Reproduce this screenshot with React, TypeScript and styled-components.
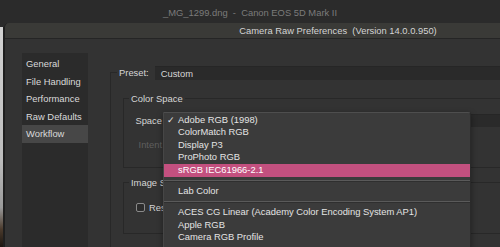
import React from "react";
import styled, { createGlobalStyle } from "styled-components";

const Global = createGlobalStyle`
  html, body { margin: 0; padding: 0; background: #2a2a2a; }
  body { font-family: "Liberation Sans", Arial, sans-serif; font-size: 9.4px; }
  * { box-sizing: border-box; }
`;

const Page = styled.div`
  width: 500px;
  height: 247px;
  overflow: hidden;
  display: flex;
  flex-direction: column;
  background: #2b2b2b;
`;

const OuterTitle = styled.div`
  height: 23px;
  flex-shrink: 0;
  display: flex;
  align-items: center;
  justify-content: center;
  color: #7b7b7b;
  white-space: pre;
  padding-top: 1px;
`;

const Stage = styled.div`
  flex: 1;
  display: flex;
  min-height: 0;
`;

const LeftStrip = styled.div`
  width: 4px;
  margin-top: 4px;
  flex-shrink: 0;
  border-right: 1px solid #1f1f1f;
  background: linear-gradient(
    to bottom,
    #d2d2d2 0%,
    #bdbdbd 60%,
    #9a9a9a 82%,
    #4a3a2c 92%,
    #1b1510 100%
  );
`;

const Dialog = styled.div`
  width: 667px;
  flex-shrink: 0;
  display: flex;
  flex-direction: column;
  background: #333333;
  border-top-left-radius: 5px;
  border-left: 1px solid #1e1e1e;
  overflow: hidden;
`;

const DialogTitle = styled.div`
  height: 16px;
  flex-shrink: 0;
  display: flex;
  align-items: center;
  justify-content: center;
  background: #3a3a37;
  border-bottom: 1px solid #252525;
  color: #d4d4d4;
  white-space: pre;
`;

const Body = styled.div`
  flex: 1;
  display: flex;
  padding: 14px 0 0 17px;
  min-height: 0;
`;

const Sidebar = styled.nav`
  width: 66px;
  flex-shrink: 0;
  background: #2b2b2b;
  padding-top: 2px;
  display: flex;
  flex-direction: column;
`;

const NavItem = styled.div<{ $active?: boolean }>`
  height: 17.5px;
  line-height: 17.5px;
  padding-left: 4px;
  color: #dadada;
  white-space: nowrap;
  background: ${(p) => (p.$active ? "#474747" : "transparent")};
`;

const Main = styled.div`
  flex: 1;
  padding-left: 22px;
  min-width: 0;
`;

const Group = styled.fieldset<{ $top: number; $tall?: boolean }>`
  margin: ${(p) => p.$top}px 0 0 0;
  padding: 0;
  border: 1px solid #282828;
  min-width: 0;
  min-height: ${(p) => (p.$tall ? "300px" : "0")};
`;

const Legend = styled.legend<{ $offset: number }>`
  margin-left: ${(p) => p.$offset}px;
  padding: 0 2px;
  line-height: 12px;
  color: #d6d6d6;
  white-space: nowrap;
`;

const PresetLegend = styled.legend`
  margin-left: 6px;
  padding: 0 0 0 2px;
  display: flex;
  align-items: center;
  gap: 6px;
  width: 560px;
  color: #d6d6d6;
`;

const Field = styled.div<{ $width: number; $disabled?: boolean }>`
  width: ${(p) => p.$width}px;
  height: 13.5px;
  line-height: 13.5px;
  padding-left: 6px;
  background: ${(p) => (p.$disabled ? "#303030" : "#2a2a2a")};
  border-top: 1px solid #262626;
  color: ${(p) => (p.$disabled ? "#5d5d5d" : "#d6d6d6")};
  white-space: nowrap;
`;

const Content = styled.div<{ $pad: string }>`
  padding: ${(p) => p.$pad};
`;

const Row = styled.div<{ $gap?: number }>`
  display: grid;
  grid-template-columns: 38px 1fr;
  column-gap: 1px;
  align-items: center;
  margin-top: ${(p) => p.$gap ?? 0}px;
`;

const RowLabel = styled.span<{ $disabled?: boolean }>`
  text-align: right;
  color: ${(p) => (p.$disabled ? "#5f5f5f" : "#d4d4d4")};
  white-space: nowrap;
`;

const SelectWrap = styled.div`
  position: relative;
`;

const CheckRow = styled.label`
  display: flex;
  align-items: center;
  gap: 4px;
  color: #d4d4d4;
  white-space: nowrap;
`;

const Box = styled.span`
  width: 9px;
  height: 9px;
  border: 1px solid #8a8a8a;
  border-radius: 2px;
  background: #2c2c2c;
`;

const Menu = styled.div`
  position: absolute;
  left: 0;
  top: -2px;
  width: 308px;
  z-index: 10;
  background: #3b3b3b;
  border-top: 1px solid #4e4e4e;
  border-left: 1px solid #464646;
  border-right: 1px solid #2a2a2a;
  border-top-right-radius: 3px;
  padding: 1px 0 4px;
  box-shadow: 0 2px 6px rgba(0, 0, 0, 0.4);
`;

const MenuItem = styled.div<{ $hi?: boolean }>`
  position: relative;
  height: 12.65px;
  line-height: 12.65px;
  padding-left: 14px;
  color: ${(p) => (p.$hi ? "#ffffff" : "#e4e4e4")};
  background: ${(p) => (p.$hi ? "#c3507f" : "transparent")};
  white-space: nowrap;
`;

const Check = styled.span`
  position: absolute;
  left: 3px;
  top: 0;
  font-family: "DejaVu Sans", sans-serif;
  font-size: 9px;
  color: #e8e8e8;
`;

const Separator = styled.div`
  margin: 3.2px 0;
  height: 2px;
  border-top: 1px solid #5a5a5a;
  border-bottom: 1px solid #2f2f2f;
`;

type Entry = { label: string; checked?: boolean; hi?: boolean } | "sep";

const entries: Entry[] = [
  { label: "Adobe RGB (1998)", checked: true },
  { label: "ColorMatch RGB" },
  { label: "Display P3" },
  { label: "ProPhoto RGB" },
  { label: "sRGB IEC61966-2.1", hi: true },
  "sep",
  { label: "Lab Color" },
  "sep",
  { label: "ACES CG Linear (Academy Color Encoding System AP1)" },
  { label: "Apple RGB" },
  { label: "Camera RGB Profile" },
];

const navItems = ["General", "File Handling", "Performance", "Raw Defaults", "Workflow"];

export default function App() {
  return (
    <>
      <Global />
      <Page>
        <OuterTitle>{"_MG_1299.dng  -  Canon EOS 5D Mark II"}</OuterTitle>
        <Stage>
          <LeftStrip />
          <Dialog>
            <DialogTitle>{"Camera Raw Preferences  (Version 14.0.0.950)"}</DialogTitle>
            <Body>
              <Sidebar>
                {navItems.map((n) => (
                  <NavItem key={n} $active={n === "Workflow"}>
                    {n}
                  </NavItem>
                ))}
              </Sidebar>
              <Main>
                <Group $top={13} $tall>
                  <PresetLegend>
                    <span>Preset:</span>
                    <Field $width={520}>Custom</Field>
                  </PresetLegend>
                  <Content $pad="0 0 0 12px">
                    <Group $top={13}>
                      <Legend $offset={5}>Color Space</Legend>
                      <Content $pad="9px 0 15px 0">
                        <Row>
                          <RowLabel>Space</RowLabel>
                          <SelectWrap>
                            <Field $width={500} />
                            <Menu>
                              {entries.map((e, i) =>
                                e === "sep" ? (
                                  <Separator key={i} />
                                ) : (
                                  <MenuItem key={i} $hi={e.hi}>
                                    {e.checked && <Check>✓</Check>}
                                    {e.label}
                                  </MenuItem>
                                )
                              )}
                            </Menu>
                          </SelectWrap>
                        </Row>
                        <Row $gap={11}>
                          <RowLabel $disabled>Intent</RowLabel>
                          <Field $width={250} $disabled />
                        </Row>
                      </Content>
                    </Group>
                    <Group $top={9}>
                      <Legend $offset={5}>Image Sizing</Legend>
                      <Content $pad="13px 0 20px 12px">
                        <CheckRow>
                          <Box />
                          <span>Res</span>
                        </CheckRow>
                      </Content>
                    </Group>
                  </Content>
                </Group>
              </Main>
            </Body>
          </Dialog>
        </Stage>
      </Page>
    </>
  );
}
